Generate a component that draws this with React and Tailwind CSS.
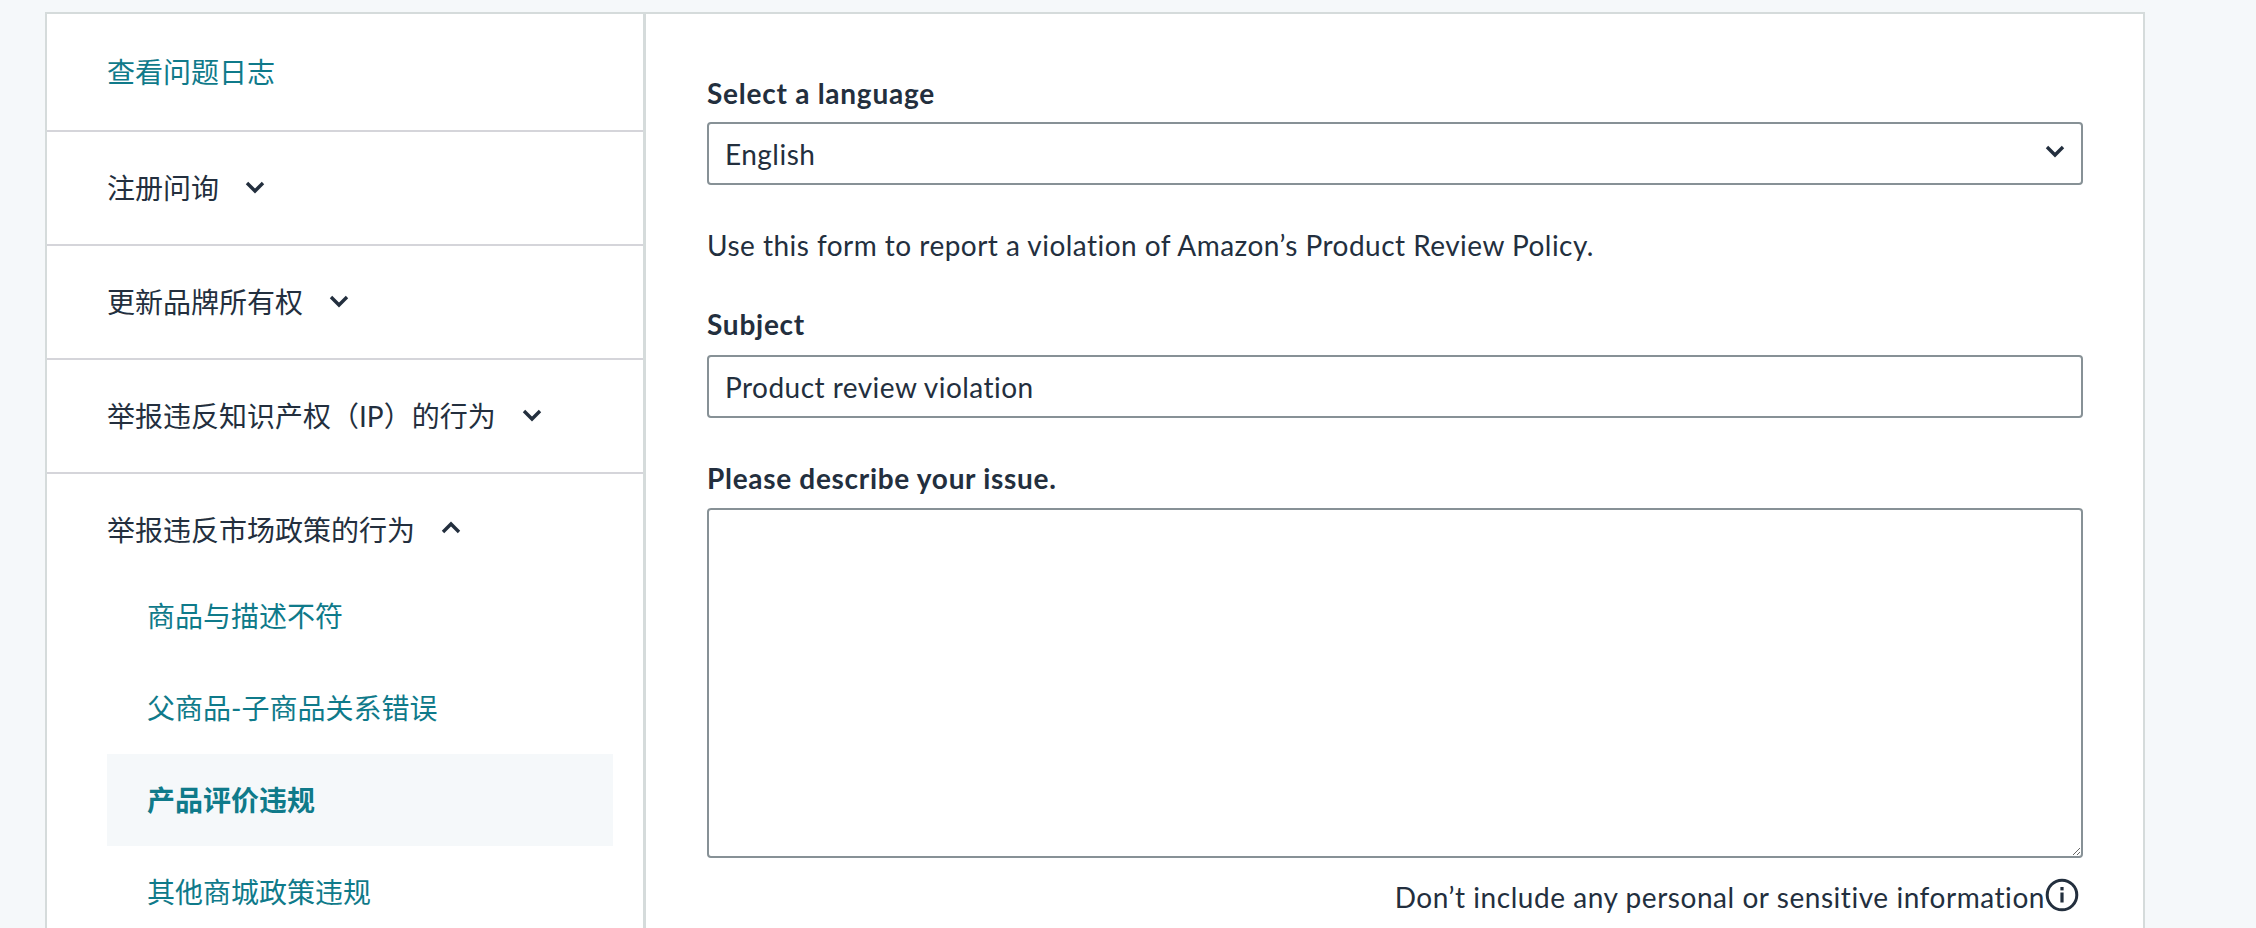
import React from "react";

const font = "font-['Lato','Noto_Sans_CJK_SC',sans-serif]";

const Chevron = ({ up }) => (
  <svg width="20" height="14" viewBox="0 0 20 14" fill="none" className={up ? "rotate-180" : "-mt-[3px]"}>
    <path d="M2 3l8 8 8-8" stroke="#232f3e" strokeWidth="3.4" />
  </svg>
);

const Row = ({ children }) => (
  <div className="flex h-[114px] items-center gap-[26px] border-b-2 border-[#d5d5da] pl-[60px] text-[#232f3e]">{children}</div>
);

const SubItem = ({ children, active }) => (
  <div className={`flex h-[92px] items-center pl-[40px] text-[#0f7a8a] ${active ? "bg-[#f5f8fa] font-bold" : ""}`}>{children}</div>
);

export default function App() {
  return (
    <div className={`h-[928px] overflow-hidden bg-[#f5f8fa] pl-[45px] pr-[111px] pt-[12px] text-[28px] leading-[40px] ${font}`}>
      <div className="flex h-[930px] border-2 border-[#d5dbdb] bg-white">
        <div className="w-[599px] shrink-0 border-r-[3px] border-[#d5dbdb]">
          <div className="flex h-[118px] items-center border-b-2 border-[#d5d5da] pl-[60px] text-[#0f7a8a]">查看问题日志</div>
          <Row>注册问询<Chevron /></Row>
          <Row>更新品牌所有权<Chevron /></Row>
          <Row>举报违反知识产权（IP）的行为<Chevron /></Row>
          <div className="flex h-[96px] items-start gap-[26px] pl-[60px] pt-[36px] text-[#232f3e]">
            举报违反市场政策的行为
            <div className="mt-[11px]"><Chevron up /></div>
          </div>
          <div className="ml-[60px] mr-[30px]">
            <SubItem>商品与描述不符</SubItem>
            <SubItem>父商品-子商品关系错误</SubItem>
            <SubItem active>产品评价违规</SubItem>
            <SubItem>其他商城政策违规</SubItem>
          </div>
        </div>
        <div className="flex-1 pl-[61px] pr-[60px] pt-[59px] tracking-[0.47px] text-[#232f3e]">
          <label className="block font-bold tracking-[0.75px]">Select a language</label>
          <div className="relative mt-[9px]">
            <select className="block h-[63px] w-full appearance-none rounded-[4px] border-2 border-[#879196] bg-white pl-[16px] text-[#232f3e] outline-none">
              <option>English</option>
            </select>
            <div className="pointer-events-none absolute right-[18px] top-[25px]"><Chevron /></div>
          </div>
          <p className="mt-[40px]">Use this form to report a violation of Amazon’s Product Review Policy.</p>
          <label className="mt-[39px] block font-bold tracking-[0.75px]">Subject</label>
          <input readOnly value="Product review violation" className="mt-[11px] block h-[63px] w-full rounded-[4px] border-2 border-[#879196] pl-[16px] text-[#232f3e] outline-none" />
          <label className="mt-[40px] block font-bold tracking-[0.7px]">Please describe your issue.</label>
          <textarea readOnly className="mt-[10px] block h-[350px] w-full rounded-[4px] border-2 border-[#879196] outline-none" />
          <div className="mt-[19px] flex items-center justify-end gap-0 pr-[4px]">
            <span className="tracking-[0.55px]">Don’t include any personal or sensitive information</span>
            <svg width="34" height="34" viewBox="0 0 34 34" fill="none" className="-mt-[4px]">
              <circle cx="17" cy="17" r="14.8" stroke="#232f3e" strokeWidth="3" />
              <rect x="15.4" y="14.5" width="3.2" height="10" fill="#232f3e" />
              <rect x="15.4" y="9" width="3.2" height="3.4" fill="#232f3e" />
            </svg>
          </div>
        </div>
      </div>
    </div>
  );
}
